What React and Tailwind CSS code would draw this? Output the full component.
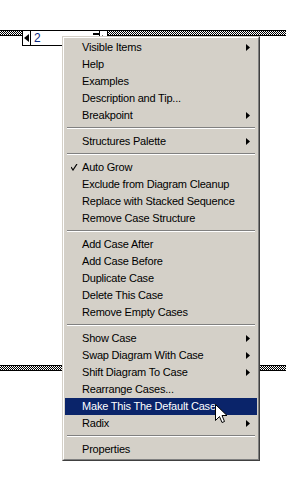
import React from "react";

const groups = [
  [
    { t: "Visible Items", sub: true },
    { t: "Help" },
    { t: "Examples" },
    { t: "Description and Tip..." },
    { t: "Breakpoint", sub: true },
  ],
  [{ t: "Structures Palette", sub: true }],
  [
    { t: "Auto Grow", check: true },
    { t: "Exclude from Diagram Cleanup" },
    { t: "Replace with Stacked Sequence" },
    { t: "Remove Case Structure" },
  ],
  [
    { t: "Add Case After" },
    { t: "Add Case Before" },
    { t: "Duplicate Case" },
    { t: "Delete This Case" },
    { t: "Remove Empty Cases" },
  ],
  [
    { t: "Show Case", sub: true },
    { t: "Swap Diagram With Case", sub: true },
    { t: "Shift Diagram To Case", sub: true },
    { t: "Rearrange Cases..." },
    { t: "Make This The Default Case", hi: true },
    { t: "Radix", sub: true },
  ],
  [{ t: "Properties" }],
];

const checker =
  "bg-[repeating-conic-gradient(#000_0_25%,#fff_0_50%)] bg-[length:2px_2px]";

function Band({ className = "" }) {
  return (
    <div className={`h-[6px] border-y border-black ${checker} ${className}`} />
  );
}

function Item({ item }) {
  return (
    <div
      className={`relative flex h-[17px] items-center pl-[17px] pr-[7px] text-[11px] leading-none tracking-[-0.2px] ${
        item.hi ? "bg-[#0a246a] text-white" : "text-black"
      }`}
    >
      {item.check && (
        <svg
          className="absolute left-[6px] top-[5px]"
          width="7"
          height="7"
          viewBox="0 0 7 7"
        >
          <path d="M0 3 L2 6 L6 0" stroke={item.hi ? "#fff" : "#000"} strokeWidth="1.2" fill="none" />
        </svg>
      )}
      <span className="flex-1 whitespace-nowrap">{item.t}</span>
      {item.sub && (
        <svg width="4" height="7" viewBox="0 0 4 7">
          <path d="M0 0 L4 3.5 L0 7 Z" fill={item.hi ? "#fff" : "#000"} />
        </svg>
      )}
    </div>
  );
}

function Sep() {
  return (
    <div className="mx-[2px] pt-[3px] pb-[4px]">
      <div className="h-px bg-[#808080]" />
      <div className="h-px bg-white" />
    </div>
  );
}

export default function App() {
  return (
    <div
      className="relative h-[482px] w-[286px] overflow-hidden bg-white"
      style={{ fontFamily: '"Liberation Sans", Arial, sans-serif' }}
    >
      {/* top structure border with selector */}
      <div className="flex items-start pt-[30px]">
        <Band className="w-[22px]" />
        <div className="flex h-[16px] w-[86px] items-stretch border border-black bg-white">
          <div className="flex w-[8px] items-center justify-center border-r border-black">
            <svg width="5" height="8" viewBox="0 0 5 8">
              <path d="M5 0 L0 4 L5 8 Z" fill="#000" />
            </svg>
          </div>
          <div className="flex-1 pl-[3px] text-[12px] leading-[14px] text-[#0a2a80]">2</div>
          <div className="flex w-[7px] items-start justify-center pt-[2px]">
            <div className="h-[2px] w-[6px] bg-black" />
          </div>
          <div className="flex w-[8px] items-center justify-center border-l border-black">
            <svg width="4" height="7" viewBox="0 0 4 7">
              <path d="M0 0 L4 3.5 L0 7 Z" fill="#000" />
            </svg>
          </div>
        </div>
        <Band className="flex-1" />
      </div>

      {/* bottom structure border */}
      <div className="mt-[319px]">
        <Band className="w-full" />
      </div>

      {/* context menu */}
      <div className="absolute left-[62px] top-[36px] w-[198px] border border-t-[#d4d0c8] border-l-[#d4d0c8] border-r-[#404040] border-b-[#404040] bg-[#d4d0c8]">
        <div className="border border-t-white border-l-white border-r-[#808080] border-b-[#808080] p-px">
          {groups.map((g, gi) => (
            <React.Fragment key={gi}>
              {gi > 0 && <Sep />}
              {g.map((it) => (
                <Item key={it.t} item={it} />
              ))}
            </React.Fragment>
          ))}
        </div>
      </div>

      {/* mouse cursor */}
      <svg
        className="absolute left-[215px] top-[404px]"
        width="13"
        height="21"
        viewBox="0 0 13 21"
      >
        <path
          d="M0.5 0.5 L0.5 16.5 L4.5 12.5 L7 18.5 L9.5 17.5 L7 11.5 L12 11.5 Z"
          fill="#fff"
          stroke="#000"
          strokeWidth="1"
          strokeLinejoin="miter"
        />
      </svg>
    </div>
  );
}
